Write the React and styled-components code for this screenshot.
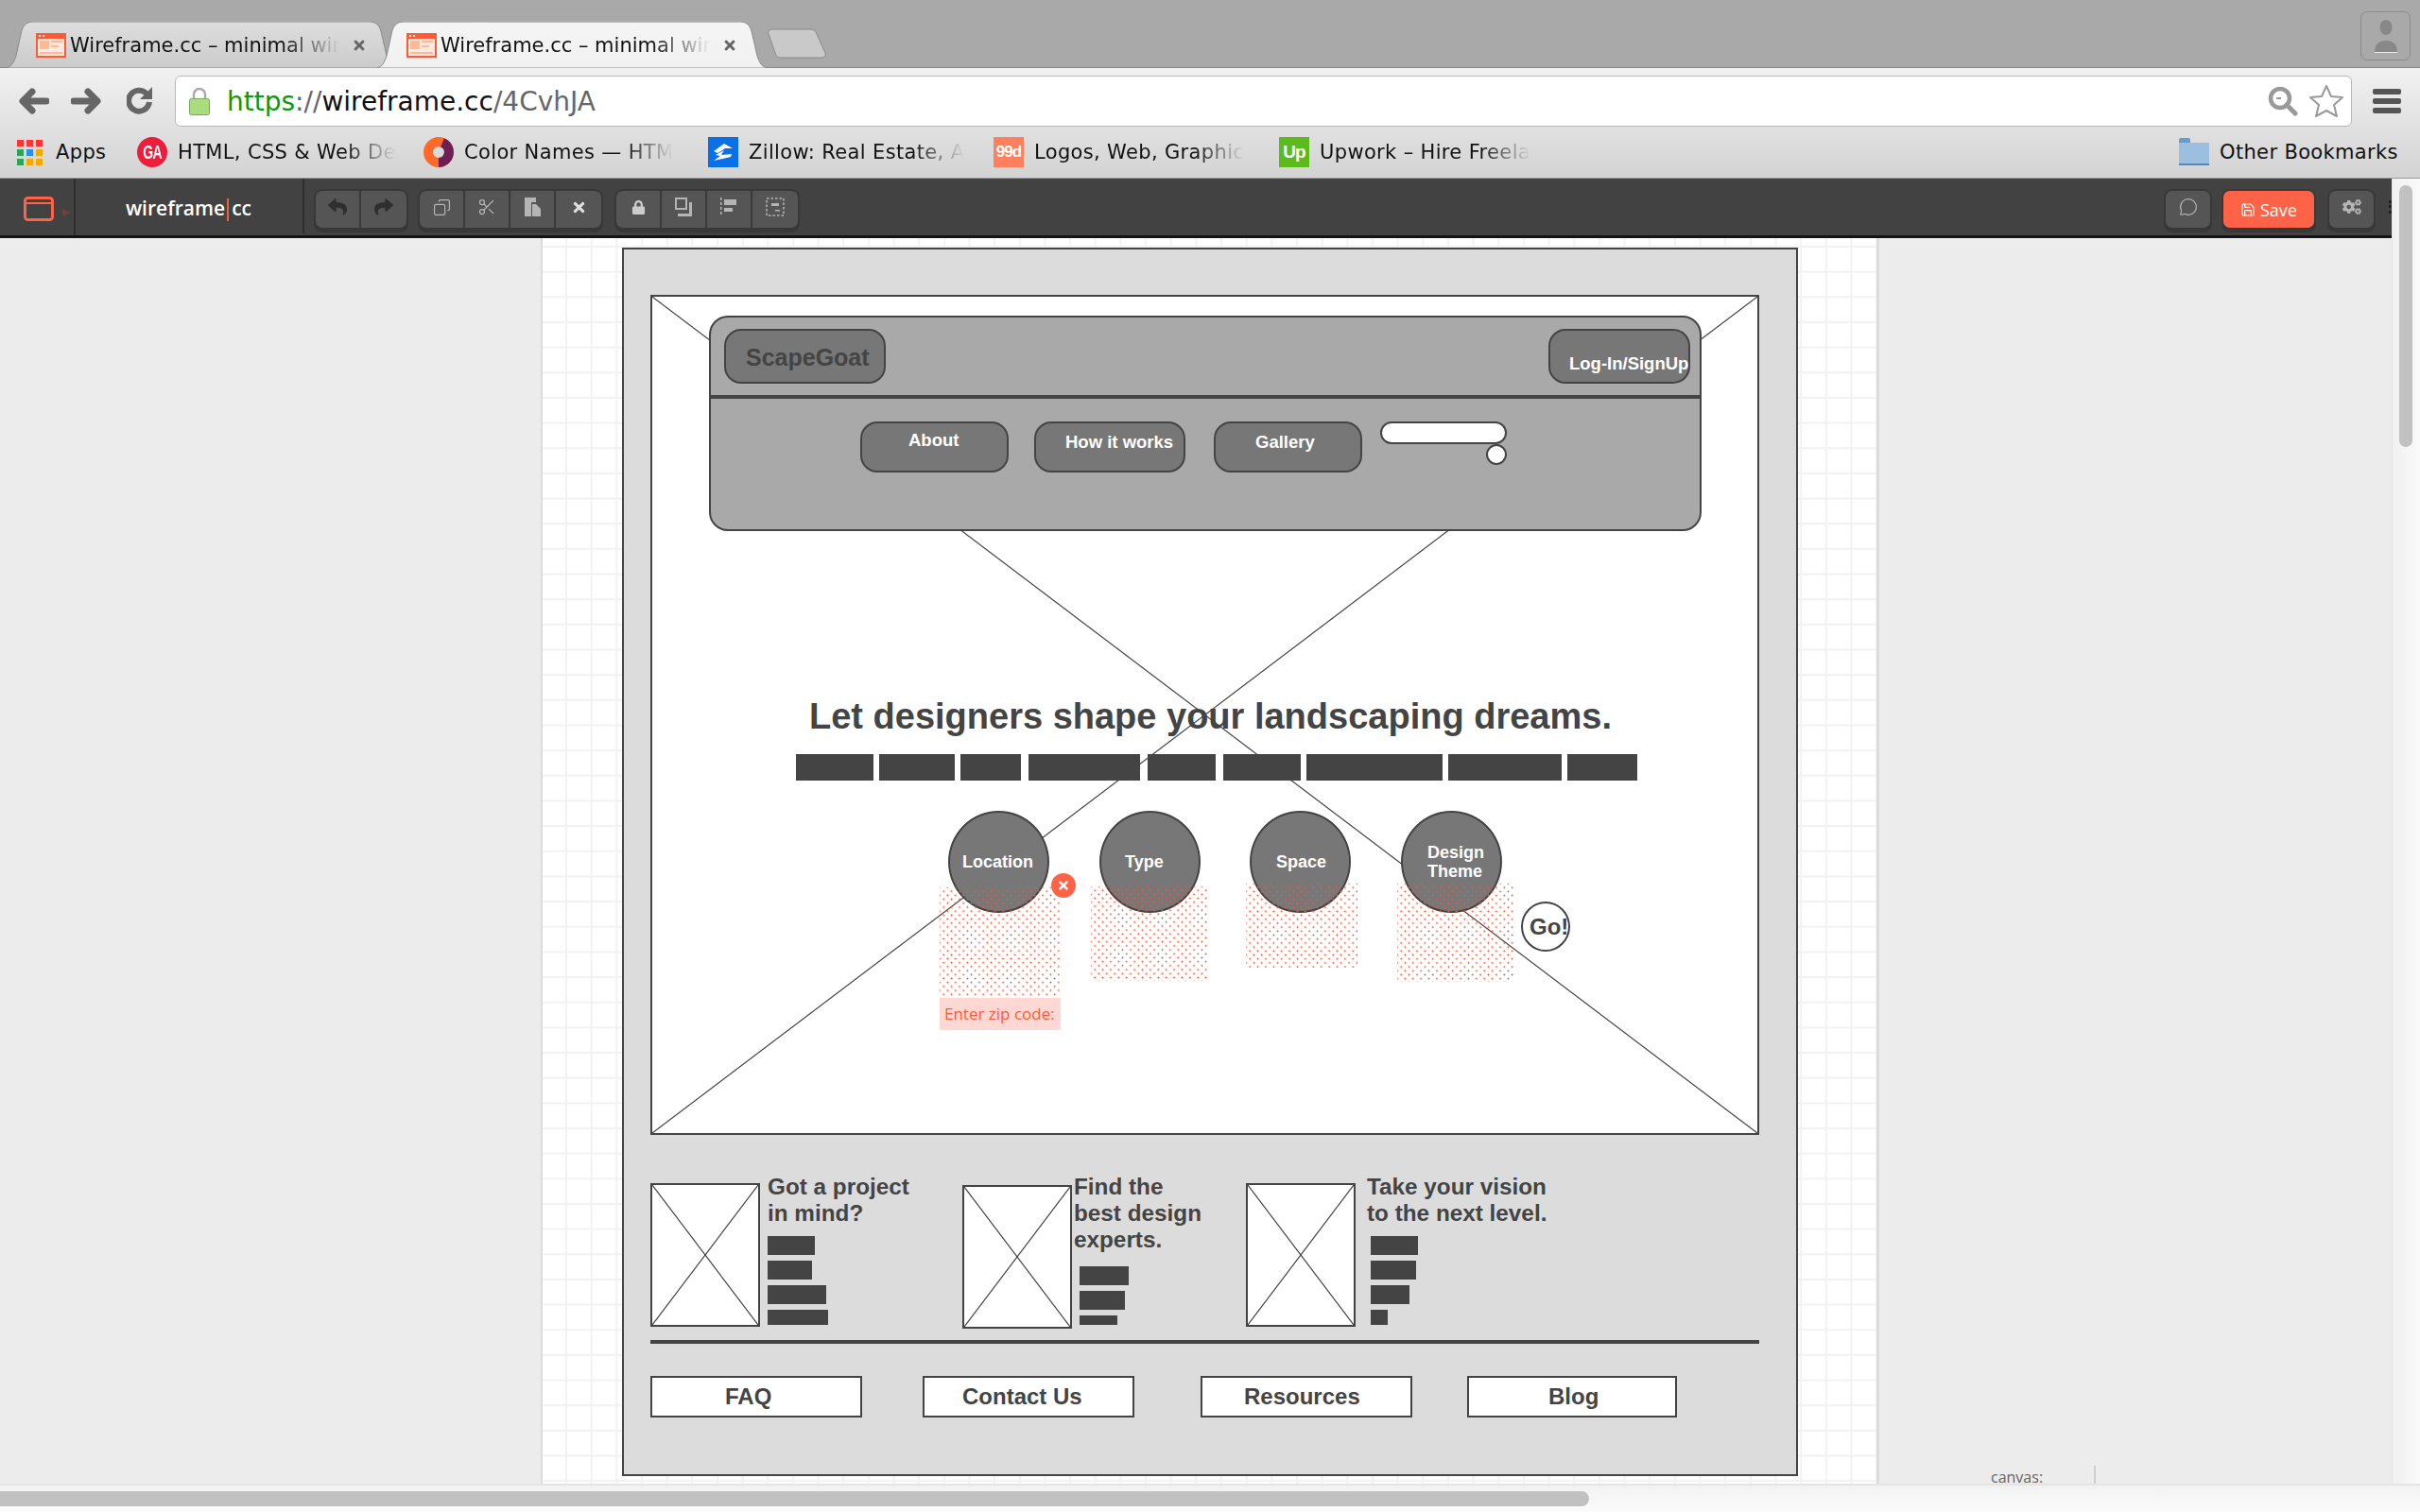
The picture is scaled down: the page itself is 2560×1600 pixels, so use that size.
import React from 'react';
import styled, { createGlobalStyle, css } from 'styled-components';
import { FaReply, FaShare, FaTimes, FaLock, FaCogs } from 'react-icons/fa';
import { Scissors, MessageCircle, Save, Copy } from 'lucide-react';

const GlobalStyle = createGlobalStyle`
  html, body { margin: 0; padding: 0; background: #fff; }
  * { box-sizing: border-box; }
`;

const Page = styled.div`
  width: 2560px;
  height: 1600px;
  overflow: hidden;
  display: flex;
  flex-direction: column;
  font-family: "DejaVu Sans", sans-serif;
`;

/* browser chrome */
const TabStrip = styled.div`
  height: 72px;
  background: #a9a9a9;
  border-bottom: 1px solid #8a8a8a;
  display: flex;
  align-items: flex-end;
  padding-left: 7px;
  position: relative;
`;

const Tab = styled.div`
  width: 412px;
  height: 49px;
  margin-right: -20px;
  position: relative;
  z-index: ${p => (p.$active ? 2 : 1)};
  display: flex;
  align-items: center;
  padding: 0 31px 0 31px;
  margin-bottom: -1px;
`;

const TabShape = styled.svg`
  position: absolute;
  inset: 0;
  width: 100%;
  height: 100%;
`;

const Glyph = styled.svg`
  flex: none;
  position: relative;
  margin-left: ${p => p.$ml || 0}px;
`;

const TabTitle = styled.div`
  flex: 1;
  margin-left: 4px;
  font-size: 21px;
  color: #111;
  white-space: nowrap;
  position: relative;
  mask-image: linear-gradient(90deg, #000 78%, transparent 100%);
`;

const TabClose = styled(FaTimes)`
  width: 16px;
  height: 16px;
  color: #666;
  position: relative;
  margin-left: 12px;
  flex: none;
`;

const NewTab = styled.svg`
  width: 64px;
  height: 32px;
  margin: 0 0 9px 20px;
  flex: none;
`;

const ProfileButton = styled.div`
  position: absolute;
  left: 2497px;
  top: 12px;
  width: 53px;
  height: 52px;
  border: 1px solid #8b8b8b;
  border-radius: 7px;
  display: flex;
  align-items: center;
  justify-content: center;
`;

const ChromeBody = styled.div`
  height: 117px;
  background: linear-gradient(180deg, #f1f1f1 0%, #d3d3d3 100%);
  border-bottom: 1px solid #999;
  display: flex;
  flex-direction: column;
`;

const NavRow = styled.div`
  height: 72px;
  display: flex;
  align-items: flex-start;
  padding-top: 8px;
`;

const NavIcon = styled.svg`
  width: ${p => p.$w}px;
  height: 54px;
  margin-left: ${p => p.$ml}px;
  flex: none;
`;

const UrlBox = styled.div`
  width: 2303px;
  height: 54px;
  margin-left: 23px;
  background: #fff;
  border: 1px solid #b8b8b8;
  border-radius: 6px;
  display: flex;
  align-items: center;
  padding: 0 7px 0 14px;
  flex: none;
`;

const UrlText = styled.div`
  flex: 1;
  margin-left: 18px;
  font-size: 28px;
  color: #666;
  white-space: nowrap;
`;

const UrlScheme = styled.span`
  color: #0a9a0a;
`;

const UrlHost = styled.span`
  color: #111;
`;

const Hamburger = styled.div`
  margin: 14px 0 0 22px;
  width: 30px;
  display: flex;
  flex-direction: column;
  gap: 4px;
  flex: none;
`;

const HamburgerBar = styled.span`
  height: 6px;
  border-radius: 2px;
  background: #555;
`;

const BookmarkRow = styled.div`
  flex: 1;
  display: flex;
  align-items: center;
  position: relative;
  padding: 0 0 9px 18px;
  margin-top: -1px;
`;

const Bookmark = styled.div`
  display: flex;
  align-items: center;
  gap: 11px;
  width: ${p => p.$w}px;
  flex: none;
`;

const BookmarkText = styled.div`
  font-size: 21px;
  letter-spacing: 0.35px;
  color: #111;
  white-space: nowrap;
  flex: none;
  mask-image: ${p => (p.$fade ? 'linear-gradient(90deg, #000 76%, transparent 100%)' : 'none')};
`;

const OtherBookmarks = styled(Bookmark)`
  margin-left: auto;
  margin-right: 22px;
`;

const AppsGrid = styled.div`
  display: grid;
  grid-template-columns: repeat(3, 7px);
  grid-auto-rows: 7px;
  gap: 3px;
  margin-right: 3px;
`;

const AppsDot = styled.span`
  background: ${p => p.$c};
`;

const GaBadge = styled.div`
  width: 32px;
  height: 32px;
  border-radius: 50%;
  background: #ee1d3d;
  border: 2px dotted #ee1d3d;
  color: #fff;
  font: bold 20px "Liberation Sans", sans-serif;
  letter-spacing: -1px;
  display: flex;
  align-items: center;
  justify-content: center;
  flex: none;
`;

const GaText = styled.span`
  display: inline-block;
  transform: scaleX(0.7);
`;

const SquareLogo = styled.div`
  width: 32px;
  height: 32px;
  background: ${p => p.$bg};
  color: #fff;
  font: bold ${p => p.$fs}px "Liberation Sans", sans-serif;
  letter-spacing: -1px;
  display: flex;
  align-items: center;
  justify-content: center;
  flex: none;
`;

/* editor */
const EditorArea = styled.div`
  flex: 1;
  display: flex;
  min-height: 0;
`;

const EditorColumn = styled.div`
  flex: 1;
  min-width: 0;
  display: flex;
  flex-direction: column;
`;

const EditorBar = styled.div`
  height: 63px;
  background: #424242;
  border-bottom: 3px solid #141414;
  display: flex;
  align-items: flex-start;
  flex: none;
`;

const LogoCell = styled.div`
  width: 80px;
  height: 60px;
  border-right: 2px solid #2f2f2f;
  padding: 19px 0 0 25px;
  display: flex;
  align-items: flex-start;
  gap: 9px;
  flex: none;
`;

const Caret = styled.span`
  width: 0;
  height: 0;
  margin-top: 13px;
  border-left: 8px solid #6e4338;
  border-top: 4px solid transparent;
  border-bottom: 4px solid transparent;
`;

const BrandCell = styled.div`
  width: 242px;
  height: 58px;
  border-right: 2px solid #2f2f2f;
  padding: 17px 0 0 53px;
  color: #fff;
  font: 600 21px "Open Sans", sans-serif;
  flex: none;
  white-space: nowrap;
`;

const BrandBar = styled.span`
  display: inline-block;
  width: 2px;
  height: 24px;
  margin: 0 3px 0 2px;
  vertical-align: -6px;
  background: #f0623f;
`;

const ToolGroup = styled.div`
  display: flex;
  height: 39px;
  margin: 13px 0 0 ${p => p.$ml}px;
  border-radius: 7px;
  background: #555;
  box-shadow: 0 0 0 2px #383838, 0 3px 0 2px #383838;
  overflow: hidden;
  flex: none;
`;

const ToolButton = styled.div`
  width: ${p => p.$w || 48}px;
  height: 100%;
  display: flex;
  align-items: center;
  justify-content: center;
  color: ${p => p.$c || '#b5b5b5'};
  border-right: 2px solid #3a3a3a;
  padding-bottom: 5px;
  &:last-child { border-right: 0; }
`;

const SaveButton = styled(ToolButton)`
  background: #ff6347;
  color: #fff;
  gap: 5px;
  font: 18px "Open Sans", sans-serif;
  padding-bottom: 0;
`;

const MirroredCopy = styled(Copy)`
  transform: scaleX(-1);
`;

const ToolSpacer = styled.div`
  flex: 1;
`;

const Grip = styled.div`
  width: 3px;
  height: 14px;
  margin: 23px 0 0 16px;
  border-left: 3px dotted #222;
  flex: none;
`;

const Stage = styled.div`
  flex: 1;
  min-height: 0;
  background: #ececec;
  padding-left: 572px;
  position: relative;
  overflow: hidden;
`;

const Paper = styled.div`
  width: 1416px;
  height: 100%;
  padding: 10px 0 0 84px;
  border-left: 2px solid #dcdcdc;
  border-right: 3px solid #dcdcdc;
  background-color: #fff;
  background-image:
    linear-gradient(90deg, #f2f2f2 2px, transparent 2px),
    linear-gradient(180deg, #f2f2f2 2px, transparent 2px);
  background-size: 26.67px 26.67px;
  background-position: 24px 8px;
`;

const StatusLabel = styled.div`
  position: absolute;
  left: 2106px;
  top: 1299px;
  width: 111px;
  height: 40px;
  padding-top: 1px;
  border-right: 2px solid #cfcfcf;
  font: 16px "Open Sans", sans-serif;
  color: #666;
`;

const VScroll = styled.div`
  width: 30px;
  background: linear-gradient(90deg, #f0f0f0, #fafafa);
  border-left: 1px solid #e4e4e4;
  padding: 7px 8px 0 7px;
  flex: none;
`;

const VThumb = styled.div`
  height: 277px;
  border-radius: 8px;
  background: #c1c1c1;
`;

const HScroll = styled.div`
  height: 30px;
  flex: none;
  display: flex;
  background: linear-gradient(180deg, #f2f2f2, #fbfbfb);
  border-top: 2px solid #e4e4e4;
  padding-top: 6px;
`;

const HThumb = styled.div`
  width: 1681px;
  height: 16px;
  border-radius: 0 8px 8px 0;
  background: #c1c1c1;
`;

/* the wireframe on the canvas */
const placed = css`
  position: absolute;
  left: ${p => p.$x}px;
  top: ${p => p.$y}px;
  width: ${p => p.$w}px;
  height: ${p => p.$h}px;
`;

const ink = '#444';

const WireFrame = styled.div`
  position: relative;
  width: 1244px;
  height: 1300px;
  background: #dcdcdc;
  box-shadow: inset 0 0 0 2px ${ink};
  font-family: "Liberation Sans", Arial, sans-serif;
`;

const XBox = styled.div`
  ${placed}
  background: #fff;
  border: 2px solid ${ink};
`;

const XLines = styled.svg`
  display: block;
  width: 100%;
  height: 100%;
`;

const NavPanel = styled.div`
  ${placed}
  background: #a9a9a9;
  border: 2px solid ${ink};
  border-radius: 20px;
`;

const Rule = styled.div`
  ${placed}
  background: ${ink};
`;

const Pill = styled.div`
  ${placed}
  background: #777;
  border: 2px solid ${ink};
  border-radius: ${p => p.$r}px;
  padding: ${p => p.$pt}px 0 0 ${p => p.$pl}px;
  color: ${p => p.$c || '#fff'};
  font-weight: bold;
  font-size: ${p => p.$fs}px;
  line-height: 24px;
  white-space: nowrap;
`;

const SearchField = styled.div`
  ${placed}
  background: #fff;
  border: 2px solid ${ink};
  border-radius: 12px;
`;

const SearchKnob = styled.div`
  ${placed}
  background: #fff;
  border: 2px solid ${ink};
  border-radius: 50%;
`;

const Headline = styled.div`
  ${placed}
  color: ${ink};
  font-weight: bold;
  font-size: 38px;
  line-height: 40px;
  white-space: nowrap;
`;

const Blackout = styled.div`
  ${placed}
  background: ${ink};
`;

const Bubble = styled.div`
  ${placed}
  background: #777;
  border: 2px solid ${ink};
  border-radius: 50%;
  color: #fff;
  font-weight: bold;
  font-size: 18px;
  line-height: 20px;
  white-space: nowrap;
  display: flex;
  align-items: center;
  padding-left: ${p => p.$pl}px;
`;

const Dropdown = styled.div`
  ${placed}
  background-image:
    radial-gradient(circle, #ff5030 0.8px, transparent 1.1px),
    radial-gradient(circle, #ff5030 0.8px, transparent 1.1px);
  background-size: 8.4px 8.4px;
  background-position: 0 0, 4.2px 4.2px;
`;

const ZipLabel = styled.div`
  ${placed}
  background: #ffd8d3;
  color: #ff5a40;
  font: 17px/34px "Open Sans", sans-serif;
  padding-left: 5px;
  white-space: nowrap;
`;

const CloseBadge = styled.div`
  ${placed}
  background: #ff6347;
  color: #fff;
  border-radius: 50%;
  display: flex;
  align-items: center;
  justify-content: center;
`;

const GoButton = styled.div`
  ${placed}
  background: #fff;
  border: 2px solid ${ink};
  border-radius: 50%;
  color: ${ink};
  font-weight: bold;
  font-size: 24px;
  line-height: 49px;
  padding-left: 7px;
  white-space: nowrap;
`;

const Blurb = styled.div`
  ${placed}
  color: ${ink};
  font-weight: bold;
  font-size: 24.3px;
  line-height: 28px;
  white-space: nowrap;
`;

const FooterLink = styled.div`
  ${placed}
  background: #fff;
  border: 2px solid ${ink};
  color: ${ink};
  font-weight: bold;
  font-size: 24px;
  line-height: 40px;
  padding-left: ${p => p.$pl}px;
`;

const X_LINES = (
  <XLines viewBox="0 0 100 100" preserveAspectRatio="none">
    <line x1="0" y1="0" x2="100" y2="100" stroke={ink} strokeWidth="1.2" vectorEffect="non-scaling-stroke" />
    <line x1="100" y1="0" x2="0" y2="100" stroke={ink} strokeWidth="1.2" vectorEffect="non-scaling-stroke" />
  </XLines>
);

const TITLE = 'Wireframe.cc – minimal wir';

const WindowIcon = () => (
  <Glyph width="32" height="26" viewBox="0 0 32 26">
    <rect x="0" y="0" width="32" height="26" fill="#ff5a36" />
    <rect x="2" y="6" width="28" height="18" fill="#ffe9df" />
    <rect x="4" y="8" width="10" height="9" fill="#ffb997" />
    <rect x="16" y="8" width="12" height="2" fill="#ffb997" />
    <rect x="16" y="13" width="8" height="2" fill="#ffb997" />
    <rect x="4" y="20" width="24" height="2" fill="#ffb997" />
    <rect x="3" y="2" width="2" height="2" fill="#fff" />
    <rect x="7" y="2" width="2" height="2" fill="#fff" />
  </Glyph>
);

const TabBackground = ({ active }) => (
  <TabShape viewBox="0 0 412 49" preserveAspectRatio="none">
    <defs>
      <linearGradient id={active ? 'tabOn' : 'tabOff'} x1="0" y1="0" x2="0" y2="1">
        <stop offset="0" stopColor={active ? '#f5f5f5' : '#dedede'} />
        <stop offset="1" stopColor={active ? '#f1f1f1' : '#cbcbcb'} />
      </linearGradient>
    </defs>
    <path
      d="M0 49 C6 47 8 42 10 36 L16 9 C18 3 22 0 28 0 L384 0 C390 0 394 3 396 10 L402 36 C404 42 406 47 412 49 Z"
      fill={`url(#${active ? 'tabOn' : 'tabOff'})`}
      stroke="#8a8a8a"
    />
  </TabShape>
);

const BrowserTab = ({ active }) => (
  <Tab $active={active}>
    <TabBackground active={active} />
    <WindowIcon />
    <TabTitle>{TITLE}</TabTitle>
    <TabClose />
  </Tab>
);

const ToolIcon = ({ children, size = 22 }) => (
  <svg width={size} height={size} viewBox="0 0 22 22" fill="currentColor">{children}</svg>
);

const BOOKMARKS = [
  { w: 303, text: 'HTML, CSS & Web De', logo: <GaBadge><GaText>GA</GaText></GaBadge> },
  {
    w: 301,
    text: 'Color Names — HTM',
    logo: (
      <Glyph width="32" height="32" viewBox="0 0 32 32">
        <circle cx="16" cy="16" r="11" fill="none" stroke="#ff6a2b" strokeWidth="10" />
        <path d="M20 5.8 A11 11 0 0 1 16 27" fill="none" stroke="#6d1f55" strokeWidth="10" />
      </Glyph>
    ),
  },
  {
    w: 302,
    text: 'Zillow: Real Estate, A',
    logo: (
      <Glyph width="32" height="32" viewBox="0 0 32 32">
        <rect width="32" height="32" fill="#0a70e8" />
        <path d="M6 15 L17 7 L26 12 L18 12 L10 17 Z M8 19 L17 14 L14 19 L25 18 L24 21 L6 25 L13 20 Z" fill="#fff" />
      </Glyph>
    ),
  },
  { w: 302, text: 'Logos, Web, Graphic', logo: <SquareLogo $bg="#ff7f5f" $fs={17}>99d</SquareLogo> },
  { w: 290, text: 'Upwork – Hire Freela', logo: <SquareLogo $bg="#5cbb1c" $fs={19}>Up</SquareLogo> },
];

const APPS_COLORS = ['#f33', '#f33', '#f33', '#2ea457', '#2d8cf0', '#f5a800', '#2ea457', '#f5a800', '#f5a800'];

const REDACT_BARS = [[184, 82], [272, 80], [358, 64], [430, 118], [556, 72], [636, 82], [724, 144], [874, 120], [1000, 74]];

const STACKS = [
  { x: 154, y: 1046, bars: [[50, 20], [47, 20], [62, 20], [64, 16]] },
  { x: 484, y: 1078, bars: [[52, 20], [48, 20], [40, 10]] },
  { x: 792, y: 1046, bars: [[50, 20], [48, 20], [41, 20], [18, 16]] },
];

const BarStack = ({ x, y, bars }) => (
  <>
    {bars.map(([w, h], i) => (
      <Blackout key={i} $x={x} $y={y + i * 26} $w={w} $h={h} />
    ))}
  </>
);

const App = () => (
  <Page>
    <GlobalStyle />
    <TabStrip>
      <BrowserTab />
      <BrowserTab active />
      <NewTab viewBox="0 0 64 32">
        <path d="M2 6 C1 2 4 1 7 1 L46 1 C50 1 52 3 53 6 L62 26 C63 30 61 31 58 31 L14 31 C11 31 10 29 9 26 Z" fill="#c9c9c9" stroke="#8a8a8a" />
      </NewTab>
      <ProfileButton>
        <svg width="26" height="40" viewBox="0 0 26 40">
          <ellipse cx="13" cy="11" rx="6.5" ry="8" fill="#888" />
          <path d="M1 37 C1 27 8 25 13 25 C18 25 25 27 25 37 Z" fill="#888" />
          <rect x="1" y="37" width="24" height="1" fill="#eee" />
        </svg>
      </ProfileButton>
    </TabStrip>

    <ChromeBody>
      <NavRow>
        <NavIcon $w={32} $ml={20} viewBox="0 0 32 54">
          <path d="M14 17 L4 27 L14 37 M5 27 L29 27" fill="none" stroke="#666" strokeWidth="7" strokeLinecap="round" strokeLinejoin="round" />
        </NavIcon>
        <NavIcon $w={32} $ml={23} viewBox="0 0 32 54">
          <path d="M18 17 L28 27 L18 37 M27 27 L3 27" fill="none" stroke="#666" strokeWidth="7" strokeLinecap="round" strokeLinejoin="round" />
        </NavIcon>
        <NavIcon $w={28} $ml={27} viewBox="0 0 28 54">
          <path d="M21 19 A11 11 0 1 0 24 28" fill="none" stroke="#666" strokeWidth="6" />
          <path d="M27 12 L27 25 L14 25 Z" fill="#666" />
        </NavIcon>
        <UrlBox>
          <Glyph width="22" height="30" viewBox="0 0 22 30">
            <path d="M5 13 V8 A6 6 0 0 1 17 8 V13" fill="none" stroke="#aaa" strokeWidth="2.5" />
            <rect x="0.5" y="12.5" width="21" height="17" rx="2" fill="#a9dc7c" stroke="#7aa85a" />
          </Glyph>
          <UrlText>
            <UrlScheme>https</UrlScheme>://<UrlHost>wireframe.cc</UrlHost>/4CvhJA
          </UrlText>
          <Glyph width="32" height="32" viewBox="0 0 32 32">
            <circle cx="13" cy="13" r="10" fill="none" stroke="#999" strokeWidth="4.5" />
            <path d="M20 20 L29 29" stroke="#999" strokeWidth="5" strokeLinecap="round" />
            <path d="M9 13 H14" stroke="#999" strokeWidth="2" />
          </Glyph>
          <Glyph $ml={11} width="38" height="36" viewBox="0 0 38 36">
            <path d="M19 2 L24 13 L36 14 L27 22 L30 34 L19 28 L8 34 L11 22 L2 14 L14 13 Z" fill="#fff" stroke="#999" strokeWidth="2" strokeLinejoin="round" />
          </Glyph>
        </UrlBox>
        <Hamburger>
          <HamburgerBar />
          <HamburgerBar />
          <HamburgerBar />
        </Hamburger>
      </NavRow>

      <BookmarkRow>
        <Bookmark $w={127}>
          <AppsGrid>
            {APPS_COLORS.map((c, i) => <AppsDot key={i} $c={c} />)}
          </AppsGrid>
          <BookmarkText>Apps</BookmarkText>
        </Bookmark>
        {BOOKMARKS.map(b => (
          <Bookmark key={b.text} $w={b.w}>
            {b.logo}
            <BookmarkText $fade>{b.text}</BookmarkText>
          </Bookmark>
        ))}
        <OtherBookmarks $w={233}>
          <Glyph width="32" height="30" viewBox="0 0 32 30">
            <path d="M0 6 L0 2 Q0 0 2 0 L10 0 Q12 0 12 2 L12 6 Z" fill="#6f9ac4" />
            <rect x="0" y="5" width="32" height="24" fill="#9dbfdf" />
            <rect x="0" y="27" width="32" height="2" fill="#5f86ad" />
          </Glyph>
          <BookmarkText>Other Bookmarks</BookmarkText>
        </OtherBookmarks>
      </BookmarkRow>
    </ChromeBody>

    <EditorArea>
      <EditorColumn>
        <EditorBar>
          <LogoCell>
            <Glyph width="32" height="26" viewBox="0 0 32 26">
              <rect x="1.5" y="1.5" width="29" height="23" rx="3" fill="none" stroke="#ff6347" strokeWidth="3" />
              <rect x="1.5" y="6" width="29" height="2" fill="#ff6347" />
            </Glyph>
            <Caret />
          </LogoCell>
          <BrandCell>wireframe<BrandBar />cc</BrandCell>
          <ToolGroup $ml={12}>
            <ToolButton $c="#2e2e2e"><FaReply size={20} /></ToolButton>
            <ToolButton $c="#2e2e2e"><FaShare size={20} /></ToolButton>
          </ToolGroup>
          <ToolGroup $ml={14}>
            <ToolButton><MirroredCopy size={19} strokeWidth={1.5} /></ToolButton>
            <ToolButton><Scissors size={20} strokeWidth={1.5} /></ToolButton>
            <ToolButton>
              <ToolIcon>
                <path d="M3 1 H15 V6 H10 V21 H3 Z M11 8 H15 L20 13 V21 H11 Z" />
              </ToolIcon>
            </ToolButton>
            <ToolButton $c="#ddd"><FaTimes size={17} /></ToolButton>
          </ToolGroup>
          <ToolGroup $ml={16}>
            <ToolButton $c="#ccc"><FaLock size={15} /></ToolButton>
            <ToolButton>
              <ToolIcon>
                <path d="M2 1 H15 V14 H2 Z M4 3 V12 H13 V3 Z M17 6 H20 V21 H5 V18 H17 Z" fillRule="evenodd" />
              </ToolIcon>
            </ToolButton>
            <ToolButton>
              <ToolIcon>
                <path d="M2 1 H3.5 V4 H2 Z M2 6 H3.5 V9 H2 Z M2 11 H3.5 V14 H2 Z M2 16 H3.5 V19 H2 Z M6 3 H19 V9 H6 Z M6 12 H15 V16 H6 Z" />
              </ToolIcon>
            </ToolButton>
            <ToolButton>
              <ToolIcon>
                <path d="M7 7 H15 V10 H7 Z M11 14 H16 V15.5 H11 Z" />
                <rect x="2" y="2" width="18" height="18" fill="none" stroke="currentColor" strokeWidth="1.6" strokeDasharray="2.5 2" />
              </ToolIcon>
            </ToolButton>
          </ToolGroup>
          <ToolSpacer />
          <ToolGroup $ml={0}>
            <ToolButton $w={47}><MessageCircle size={20} strokeWidth={1.4} /></ToolButton>
          </ToolGroup>
          <ToolGroup $ml={14}>
            <SaveButton $w={96}><Save size={16} strokeWidth={1.8} />Save</SaveButton>
          </ToolGroup>
          <ToolGroup $ml={16}>
            <ToolButton $w={47}><FaCogs size={20} /></ToolButton>
          </ToolGroup>
          <Grip />
        </EditorBar>

        <Stage>
          <Paper>
            <WireFrame>
              <XBox $x={30} $y={50} $w={1173} $h={889}>{X_LINES}</XBox>

              <NavPanel $x={92} $y={72} $w={1050} $h={228} />
              <Rule $x={92} $y={156} $w={1050} $h={4} />
              <Pill $x={108} $y={86} $w={171} $h={58} $r={18} $pl={21} $pt={16} $c={ink} $fs={25}>ScapeGoat</Pill>
              <Pill $x={980} $y={86} $w={150} $h={58} $r={18} $pl={20} $pt={23} $fs={18.5}>Log-In/SignUp</Pill>
              <Pill $x={252} $y={184} $w={157} $h={54} $r={18} $pl={49} $pt={6} $fs={18.5}>About</Pill>
              <Pill $x={436} $y={184} $w={160} $h={54} $r={18} $pl={31} $pt={8} $fs={18.5}>How it works</Pill>
              <Pill $x={626} $y={184} $w={157} $h={54} $r={18} $pl={42} $pt={8} $fs={18.5}>Gallery</Pill>
              <SearchField $x={802} $y={184} $w={134} $h={24} />
              <SearchKnob $x={914} $y={208} $w={22} $h={22} />

              <Headline $x={198} $y={476} $w={860} $h={40}>Let designers shape your landscaping dreams.</Headline>
              {REDACT_BARS.map(([x, w]) => (
                <Blackout key={x} $x={x} $y={536} $w={w} $h={28} />
              ))}

              <Bubble $x={345} $y={596} $w={107} $h={108} $pl={13}>Location</Bubble>
              <Bubble $x={505} $y={596} $w={107} $h={108} $pl={25}>Type</Bubble>
              <Bubble $x={664} $y={596} $w={107} $h={108} $pl={26}>Space</Bubble>
              <Bubble $x={824} $y={596} $w={107} $h={108} $pl={26}>Design<br />Theme</Bubble>

              <Dropdown $x={336} $y={677} $w={127} $h={116} />
              <Dropdown $x={496} $y={676} $w={124} $h={100} />
              <Dropdown $x={660} $y={673} $w={118} $h={89} />
              <Dropdown $x={820} $y={673} $w={124} $h={104} />
              <ZipLabel $x={336} $y={794} $w={128} $h={34}>Enter zip code:</ZipLabel>
              <CloseBadge $x={454} $y={662} $w={26} $h={26}><FaTimes size={14} /></CloseBadge>
              <GoButton $x={951} $y={692} $w={52} $h={53}>Go!</GoButton>

              <XBox $x={30} $y={990} $w={116} $h={152}>{X_LINES}</XBox>
              <Blurb $x={154} $y={980} $w={170} $h={56}>Got a project<br />in mind?</Blurb>
              <BarStack {...STACKS[0]} />

              <XBox $x={360} $y={992} $w={116} $h={152}>{X_LINES}</XBox>
              <Blurb $x={478} $y={980} $w={170} $h={84}>Find the<br />best design<br />experts.</Blurb>
              <BarStack {...STACKS[1]} />

              <XBox $x={660} $y={990} $w={116} $h={152}>{X_LINES}</XBox>
              <Blurb $x={788} $y={980} $w={200} $h={56}>Take your vision<br />to the next level.</Blurb>
              <BarStack {...STACKS[2]} />

              <Rule $x={30} $y={1156} $w={1173} $h={4} />

              <FooterLink $x={30} $y={1194} $w={224} $h={44} $pl={77}>FAQ</FooterLink>
              <FooterLink $x={318} $y={1194} $w={224} $h={44} $pl={40}>Contact Us</FooterLink>
              <FooterLink $x={612} $y={1194} $w={224} $h={44} $pl={44}>Resources</FooterLink>
              <FooterLink $x={894} $y={1194} $w={222} $h={44} $pl={84}>Blog</FooterLink>
            </WireFrame>
          </Paper>
          <StatusLabel>canvas:</StatusLabel>
        </Stage>
      </EditorColumn>
      <VScroll>
        <VThumb />
      </VScroll>
    </EditorArea>

    <HScroll>
      <HThumb />
    </HScroll>
  </Page>
);

export default App;
